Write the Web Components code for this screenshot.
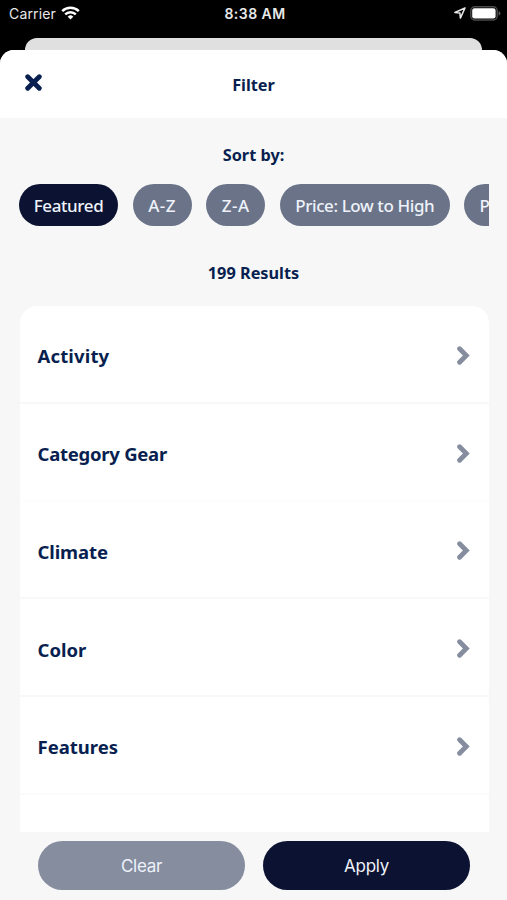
<!DOCTYPE html>
<html lang="en">
<head>
<meta charset="utf-8">
<title>Filter</title>
<style>
    body {
        margin: 0;
        background: #000;
        font-family: "Noto Sans", sans-serif;
        color: #081f4f;
        overflow: hidden;
    }
</style>
</head>
<body>
<filter-screen></filter-screen>

<script>
const statusBarTemplate = document.createElement('template');
statusBarTemplate.innerHTML = `
    <style>
    :host {
        display: grid;
        grid-template-columns: 1fr auto 1fr;
        align-items: center;
        height: 26px;
        padding: 0 6px 0 9px;
        box-sizing: border-box;
        font-family: Inter, sans-serif;
        font-size: 14px;
        color: #e8e8e8;
    }
    .left, .right {
        display: flex;
        align-items: center;
    }
    .left {
        gap: 5px;
    }
    .carrier {
        letter-spacing: 0.15px;
        padding-top: 1px;
    }
    .right {
        justify-content: flex-end;
        gap: 4px;
    }
    .time {
        font-weight: 600;
        font-size: 14px;
        letter-spacing: 0.45px;
        padding-top: 1px;
    }
    svg {
        display: block;
    }
    </style>
    <div class="left">
        <span class="carrier">Carrier</span>
        <svg width="19" height="14" viewBox="0 0 19 14" fill="none" stroke="#fff" stroke-width="2.5">
            <path d="M1.2 5.2a12 12 0 0 1 16.6 0"/>
            <path d="M4.2 8.4a7.6 7.6 0 0 1 10.6 0"/>
            <path d="M9.5 13.6l-2.8-2.9a4 4 0 0 1 5.6 0z" fill="#fff" stroke="none"/>
        </svg>
    </div>
    <span class="time"><slot></slot></span>
    <div class="right">
        <svg width="12" height="12" viewBox="0 0 12 12" fill="none" stroke="#e8e8e8" stroke-width="1.5" stroke-linejoin="round">
            <path d="M11 1L.9 5.5l5 .6.5 5z"/>
        </svg>
        <svg width="31" height="15" viewBox="0 0 31 15">
            <rect x=".8" y=".8" width="26.4" height="13.2" rx="4" fill="none" stroke="#4b4b4b" stroke-width="1.5"/>
            <rect x="2.2" y="2.3" width="23.4" height="10.2" rx="2.3" fill="#fff"/>
            <path d="M28.6 5v4.8q1.9-1 1.9-2.4t-1.9-2.4z" fill="#5a5a5a"/>
        </svg>
    </div>
`;

class StatusBar extends HTMLElement {
    constructor() {
        super();
        this.attachShadow({ mode: 'open' });
        this.shadowRoot.appendChild(statusBarTemplate.content.cloneNode(true));
    }
}

const sheetHeaderTemplate = document.createElement('template');
sheetHeaderTemplate.innerHTML = `
    <style>
    :host {
        display: grid;
        grid-template-columns: 1fr auto 1fr;
        align-items: center;
        height: 68px;
        padding: 0 25px;
        box-sizing: border-box;
        background: #fff;
    }
    button {
        justify-self: start;
        padding: 0;
        margin-bottom: 3px;
        border: 0;
        background: none;
    }
    svg {
        display: block;
    }
    .title {
        font-size: 16.3px;
        font-weight: 700;
        padding-top: 1px;
    }
    </style>
    <button aria-label="Close">
        <svg width="17" height="17" viewBox="0 0 17 17" stroke="#081f4f" stroke-width="4.8" stroke-linecap="round">
            <path d="M2.7 2.7l11.6 11.6M14.3 2.7L2.7 14.3"/>
        </svg>
    </button>
    <span class="title"><slot></slot></span>
`;

class SheetHeader extends HTMLElement {
    constructor() {
        super();
        this.attachShadow({ mode: 'open' });
        this.shadowRoot.appendChild(sheetHeaderTemplate.content.cloneNode(true));
    }
}

const sortChipTemplate = document.createElement('template');
sortChipTemplate.innerHTML = `
    <style>
    :host {
        display: flex;
        flex: none;
        align-items: center;
        justify-content: center;
        height: 42px;
        padding: 1px 0 0;
        border-radius: 21px;
        box-sizing: border-box;
        background: #6a7388;
        color: #eef2fa;
        font-size: 17px;
        font-weight: 500;
        letter-spacing: -0.4px;
        white-space: nowrap;
    }
    :host([selected]) {
        background: #0c1231;
    }
    </style>
    <slot></slot>
`;

class SortChip extends HTMLElement {
    constructor() {
        super();
        this.attachShadow({ mode: 'open' });
        this.shadowRoot.appendChild(sortChipTemplate.content.cloneNode(true));
    }
}

const filterRowTemplate = document.createElement('template');
filterRowTemplate.innerHTML = `
    <style>
    :host {
        display: flex;
        flex: none;
        align-items: center;
        justify-content: space-between;
        height: 97.75px;
        padding: 0 19px 0 17.5px;
        box-sizing: border-box;
        border-bottom: 2px solid var(--divider, #f8f8f8);
        font-size: 18.5px;
        font-weight: 700;
    }
    .label {
        padding-top: 4px;
    }
    svg {
        display: block;
        margin-top: 3px;
    }
    </style>
    <span class="label"><slot></slot></span>
    <svg width="13" height="19" viewBox="0 0 13 19" fill="none" stroke="#858d9f" stroke-width="4.8" stroke-linecap="round">
        <path d="M2.6 2.8l6.7 6.7-6.7 6.7"/>
    </svg>
`;

class FilterRow extends HTMLElement {
    constructor() {
        super();
        this.attachShadow({ mode: 'open' });
        this.shadowRoot.appendChild(filterRowTemplate.content.cloneNode(true));
    }
}

const pillButtonTemplate = document.createElement('template');
pillButtonTemplate.innerHTML = `
    <style>
    :host {
        display: block;
        flex: 1;
    }
    button {
        display: block;
        width: 100%;
        height: 49px;
        padding: 0;
        border: 0;
        border-radius: 25px;
        background: #858d9f;
        color: #eef2fa;
        font: 17px Inter, sans-serif;
        letter-spacing: -0.3px;
    }
    :host([primary]) button {
        background: #0c1231;
    }
    </style>
    <button><slot></slot></button>
`;

class PillButton extends HTMLElement {
    constructor() {
        super();
        this.attachShadow({ mode: 'open' });
        this.shadowRoot.appendChild(pillButtonTemplate.content.cloneNode(true));
    }
}

const filterScreenTemplate = document.createElement('template');
filterScreenTemplate.innerHTML = `
    <style>
    :host {
        display: flex;
        flex-direction: column;
        width: 507px;
        height: 900px;
        background: #000;
    }
    .behind {
        flex: none;
        height: 12px;
        margin: 12px 25px 0;
        border-radius: 12px 12px 0 0;
        background: #e0e0e0;
    }
    .sheet {
        flex: 1;
        min-height: 0;
        display: flex;
        flex-direction: column;
        border-radius: 14px 14px 0 0;
        background: #f7f7f7;
        overflow: hidden;
    }
    .sort-title, .results {
        flex: none;
        text-align: center;
        font-size: 16.3px;
        font-weight: 700;
        line-height: 22px;
    }
    .sort-title {
        margin-top: 26px;
    }
    .results {
        margin-top: 36px;
    }
    .chips {
        flex: none;
        display: flex;
        gap: 14.6px;
        margin: 18px 18px 0 19px;
        overflow: hidden;
    }
    .short {
        width: 59px;
        letter-spacing: 0.5px;
    }
    .last {
        width: 170px;
        padding-left: 15px;
        justify-content: flex-start;
    }
    .rows {
        flex: 1;
        min-height: 0;
        margin: 22px 18px 0 20px;
        border-radius: 17px 17px 0 0;
        background: #fff;
        overflow: hidden;
    }
    .footer {
        flex: none;
        display: flex;
        gap: 18px;
        padding: 9px 37px 10px 38px;
    }
    </style>
    <status-bar>8:38 AM</status-bar>
    <div class="behind"></div>
    <div class="sheet">
        <sheet-header>Filter</sheet-header>
        <div class="sort-title">Sort by:</div>
        <div class="chips">
            <sort-chip selected style="width: 99px">Featured</sort-chip>
            <sort-chip class="short">A-Z</sort-chip>
            <sort-chip class="short">Z-A</sort-chip>
            <sort-chip style="width: 170px">Price: Low to High</sort-chip>
            <sort-chip class="last">P</sort-chip>
        </div>
        <div class="results">199 Results</div>
        <div class="rows">
            <filter-row style="letter-spacing: 0.15px">Activity</filter-row>
            <filter-row style="letter-spacing: -0.25px; --divider: #fdfdfd">Category Gear</filter-row>
            <filter-row style="letter-spacing: -0.1px">Climate</filter-row>
            <filter-row>Color</filter-row>
            <filter-row style="--divider: #fbfbfb">Features</filter-row>
        </div>
        <div class="footer">
            <pill-button>Clear</pill-button>
            <pill-button primary>Apply</pill-button>
        </div>
    </div>
`;

class FilterScreen extends HTMLElement {
    constructor() {
        super();
        this.attachShadow({ mode: 'open' });
        this.shadowRoot.appendChild(filterScreenTemplate.content.cloneNode(true));
    }
}

window.customElements.define('status-bar', StatusBar);
window.customElements.define('sheet-header', SheetHeader);
window.customElements.define('sort-chip', SortChip);
window.customElements.define('filter-row', FilterRow);
window.customElements.define('pill-button', PillButton);
window.customElements.define('filter-screen', FilterScreen);
</script>
</body>
</html>
